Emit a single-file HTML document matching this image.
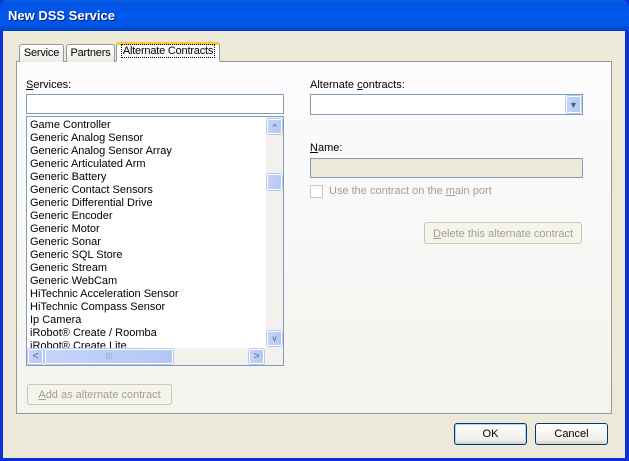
<!DOCTYPE html>
<html><head><style>
*{box-sizing:border-box;margin:0;padding:0}
body{width:629px;height:461px;overflow:hidden;font-family:Tahoma,"Liberation Sans",sans-serif;font-size:11px;color:#000;background:#0831d9;position:relative}
.a{position:absolute;white-space:nowrap}
#title{left:0;top:0;width:629px;height:31px;background:linear-gradient(#0a5fea,#0153e3 15%,#0058ee 50%,#0055e5 85%,#0042c0);border-radius:7px 7px 0 0;color:#fff;font-weight:bold;font-size:13px;padding:8px 0 0 8px;text-shadow:1px 1px #0a1e6e}
#body{left:3px;top:31px;width:622px;height:427px;background:#ece9d8}
#panel{left:16px;top:61px;width:596px;height:353px;border:1px solid #919b9c;background:linear-gradient(#fcfcfe,#f4f3ee)}
.tab{top:44px;height:18px;border:1px solid #919b9c;border-bottom:none;border-radius:3px 3px 0 0;background:linear-gradient(#fff,#ecebe5);padding:2px 0 0 0;text-align:center;font-size:11px;letter-spacing:-0.2px}
.tb{border:1px solid #7f9db9;background:#fff}
.btn{border:1px solid #c9c7ba;border-radius:3px;background:#f5f4ea;color:#a19e8f;text-align:center}
.btn2{border:1px solid #003c74;border-radius:3px;background:linear-gradient(#fff,#f0efe8 80%,#d6d0c5);text-align:center;padding-top:4px}
.sb{background:linear-gradient(90deg,#c6d3f7,#b4c8f6);border:1px solid #fff;outline:1px solid #b6c8f4;border-radius:2px}
.li div{height:13px;line-height:13px;padding-left:3px;white-space:nowrap}
</style></head><body>
<div id="title" class="a">New DSS Service</div>
<div id="body" class="a"></div>
<div id="panel" class="a"></div>
<div class="a tab" style="left:19px;width:45px">Service</div>
<div class="a tab" style="left:66px;width:49px">Partners</div>
<div class="a tab" style="left:116px;top:42px;height:20px;width:104px;background:#fcfcfe;border-top:3px solid #ffc83c;border-bottom:1px solid #fcfcfe;padding:0"><span style="border:1px dotted #000;padding:0 1px">Alternate Contracts</span></div>

<div class="a" style="left:26px;top:79px"><u>S</u>ervices:</div>
<div class="a tb" style="left:26px;top:94px;width:258px;height:20px"></div>
<div class="a tb" style="left:26px;top:116px;width:258px;height:250px;overflow:hidden">
<div class="li a" style="left:0;top:2px;width:240px">
<div>Game Controller</div><div>Generic Analog Sensor</div><div>Generic Analog Sensor Array</div><div>Generic Articulated Arm</div><div>Generic Battery</div><div>Generic Contact Sensors</div><div>Generic Differential Drive</div><div>Generic Encoder</div><div>Generic Motor</div><div>Generic Sonar</div><div>Generic SQL Store</div><div>Generic Stream</div><div>Generic WebCam</div><div>HiTechnic Acceleration Sensor</div><div>HiTechnic Compass Sensor</div><div>Ip Camera</div><div>iRobot® Create / Roomba</div><div>iRobot® Create Lite</div></div>
<div class="a" style="left:239px;top:0;width:17px;height:231px;background:#f3f1ec"></div>
<div class="a sb" style="left:240px;top:2px;width:15px;height:15px;font-size:9px;text-align:center;color:#4d6185;line-height:15px">^</div>
<div class="a sb" style="left:240px;top:57px;width:15px;height:16px"></div>
<div class="a sb" style="left:240px;top:214px;width:15px;height:15px;font-size:8px;text-align:center;color:#4d6185;line-height:14px">v</div>
<div class="a" style="left:0;top:231px;width:256px;height:17px;background:#f3f1ec"></div>
<div class="a sb" style="left:1px;top:232px;width:15px;height:15px;font-size:10px;text-align:center;color:#4d6185;line-height:14px">&lt;</div>
<div class="a sb" style="left:18px;top:232px;width:128px;height:15px;font-size:7px;text-align:center;color:#8ea4d8;line-height:14px">||||</div>
<div class="a sb" style="left:222px;top:232px;width:15px;height:15px;font-size:10px;text-align:center;color:#4d6185;line-height:14px">&gt;</div>
</div>
<div class="a btn" style="left:27px;top:384px;width:145px;height:21px;padding-top:4px"><u>A</u>dd as alternate contract</div>

<div class="a" style="left:310px;top:79px">Alternate <u>c</u>ontracts:</div>
<div class="a tb" style="left:310px;top:94px;width:273px;height:21px"><div class="a sb" style="right:1px;top:1px;width:15px;height:17px;font-size:9px;text-align:center;color:#4d6185;line-height:16px">&#9660;</div></div>
<div class="a" style="left:310px;top:142px"><u>N</u>ame:</div>
<div class="a tb" style="left:310px;top:158px;width:273px;height:20px;background:#ece9d8"></div>
<div class="a" style="left:310px;top:185px;width:13px;height:13px;border:1px solid #c9c7ba;background:#fff"></div>
<div class="a" style="left:329px;top:185px;color:#a19e8f">Use the contract on the <u>m</u>ain port</div>
<div class="a btn" style="left:424px;top:222px;width:158px;height:22px;padding-top:5px"><u>D</u>elete this alternate contract</div>

<div class="a btn2" style="left:454px;top:423px;width:73px;height:22px;box-shadow:inset 0 0 0 1px #b8d0f8">OK</div>
<div class="a btn2" style="left:535px;top:423px;width:73px;height:22px">Cancel</div>
</body></html>
